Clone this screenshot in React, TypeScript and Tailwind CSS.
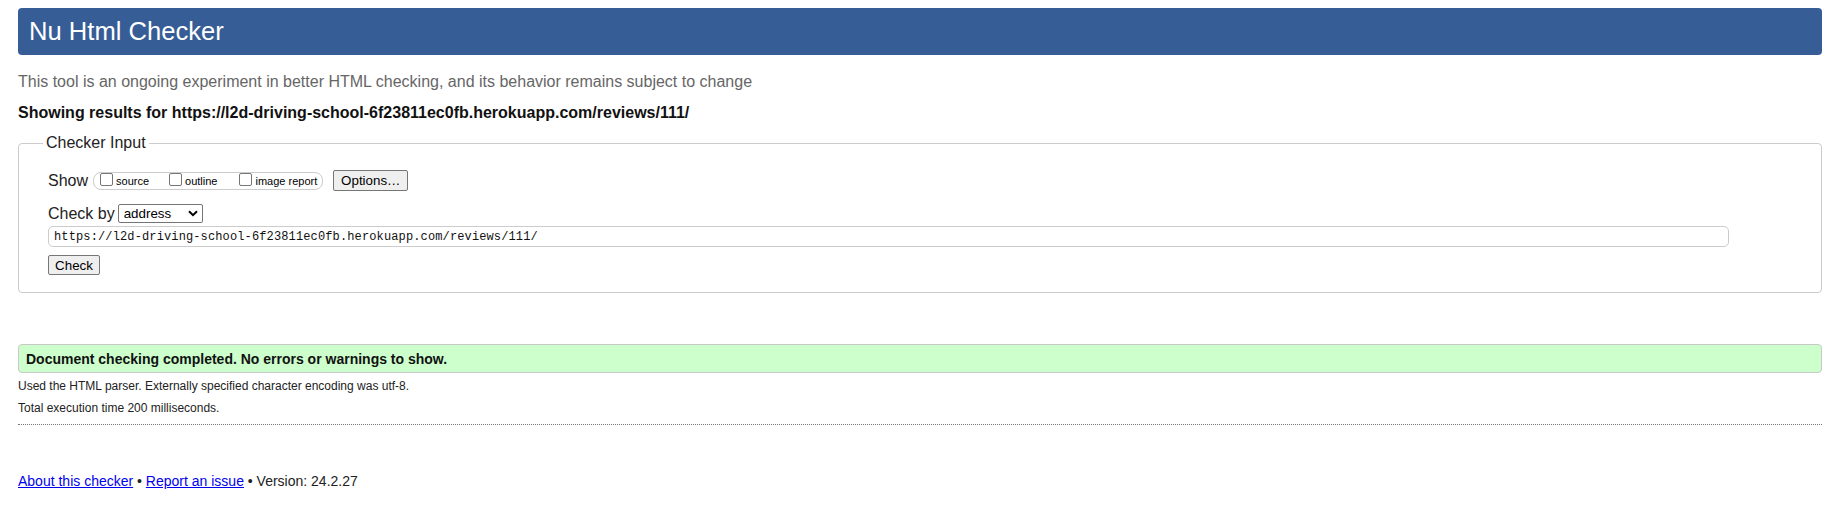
import React from "react";

function Checkbox() {
  return (
    <span className="inline-block h-[13px] w-[13px] shrink-0 self-start rounded-[2px] border border-[#767676] bg-white" />
  );
}

export default function App() {
  return (
    <div className="min-h-[521px] bg-white pl-[18px] pr-[19px] pt-[8px] font-['Liberation_Sans',Arial,sans-serif] text-black">
      <h1 className="h-[47px] rounded-[4px] bg-[#365d95] pl-[11px] text-[25.6px] font-normal leading-[46px] text-white">
        Nu Html Checker
      </h1>
      <p className="mt-[18px] text-[16px] leading-[18px] text-[#666]">
        This tool is an ongoing experiment in better HTML checking, and its behavior remains subject to change
      </p>
      <p className="mt-[13px] text-[16px] font-bold leading-[18px] text-[#111]">
        Showing results for https://l2d-driving-school-6f23811ec0fb.herokuapp.com/reviews/111/
      </p>

      <fieldset className="mt-[12px] rounded-[4px] border border-[#ccc]">
        <legend className="ml-[24px] px-[3px] text-[16px] leading-[18px] text-[#222]">Checker Input</legend>
        <div className="pb-[17px] pl-[29px] pt-[18px]">
          <div className="flex h-[21px] items-center">
            <span className="text-[16px] leading-[18px] text-[#222]">Show</span>
            <div className="ml-[5px] flex h-[18px] items-start rounded-[8px] border border-[#ccc] pl-[6px] pr-[5px]">
              <Checkbox />
              <span className="mb-[1px] ml-[3px] self-end text-[11px] leading-[13px]">source</span>
              <span className="ml-[20px] flex">
                <Checkbox />
              </span>
              <span className="mb-[1px] ml-[3px] self-end text-[11px] leading-[13px]">outline</span>
              <span className="ml-[22px] flex">
                <Checkbox />
              </span>
              <span className="mb-[1px] ml-[3px] self-end text-[11px] leading-[13px]">image report</span>
            </div>
            <div className="ml-[10px] flex h-[21px] w-[75px] items-center justify-center rounded-[2px] border border-[#767676] bg-[#efefef] text-[13.33px] leading-[15px]">
              Options…
            </div>
          </div>

          <div className="mt-[13px] flex h-[19px] items-center">
            <span className="text-[16px] leading-[18px] text-[#222]">Check by</span>
            <div className="ml-[3px] flex h-[19px] w-[85px] items-center justify-between rounded-[2px] border border-[#767676] bg-white pl-[5px] pr-[4px] text-[13.33px] leading-[15px]">
              <span>address</span>
              <svg width="10" height="7" viewBox="0 0 10 7">
                <path d="M1 1.2 L5 5.2 L9 1.2" fill="none" stroke="#000" strokeWidth="2" />
              </svg>
            </div>
          </div>

          <div className="mt-[3px] flex h-[21px] w-[1681px] items-center rounded-[5px] border border-[#ccc] bg-white pl-[5px] font-['Liberation_Mono',monospace] text-[12px] leading-[14px] tracking-[0.13px] text-[#111]">
            https://l2d-driving-school-6f23811ec0fb.herokuapp.com/reviews/111/
          </div>

          <div className="mt-[8px] flex h-[20px] w-[52px] items-center justify-center rounded-[2px] border border-[#767676] bg-[#efefef] text-[13.33px] leading-[15px]">
            Check
          </div>
        </div>
      </fieldset>

      <div className="mt-[51px] flex h-[29px] items-center rounded-[4px] border border-[#c8c8c8] bg-[#ccffcc] px-[7px] text-[14px] font-bold leading-[16px] text-[#111]">
        Document checking completed. No errors or warnings to show.
      </div>
      <p className="mt-[6px] text-[12px] leading-[14px] text-[#222]">
        Used the HTML parser. Externally specified character encoding was utf-8.
      </p>
      <p className="mt-[8px] text-[12px] leading-[14px] text-[#222]">Total execution time 200 milliseconds.</p>
      <div className="mt-[9px] h-0 border-t border-dotted border-[#777]" />

      <p className="mt-[48px] text-[14px] leading-[16px] text-[#222]">
        <a href="#" className="text-[#0000ee] underline">About this checker</a>
        {" • "}
        <a href="#" className="text-[#0000ee] underline">Report an issue</a>
        {" • Version: 24.2.27"}
      </p>
    </div>
  );
}
